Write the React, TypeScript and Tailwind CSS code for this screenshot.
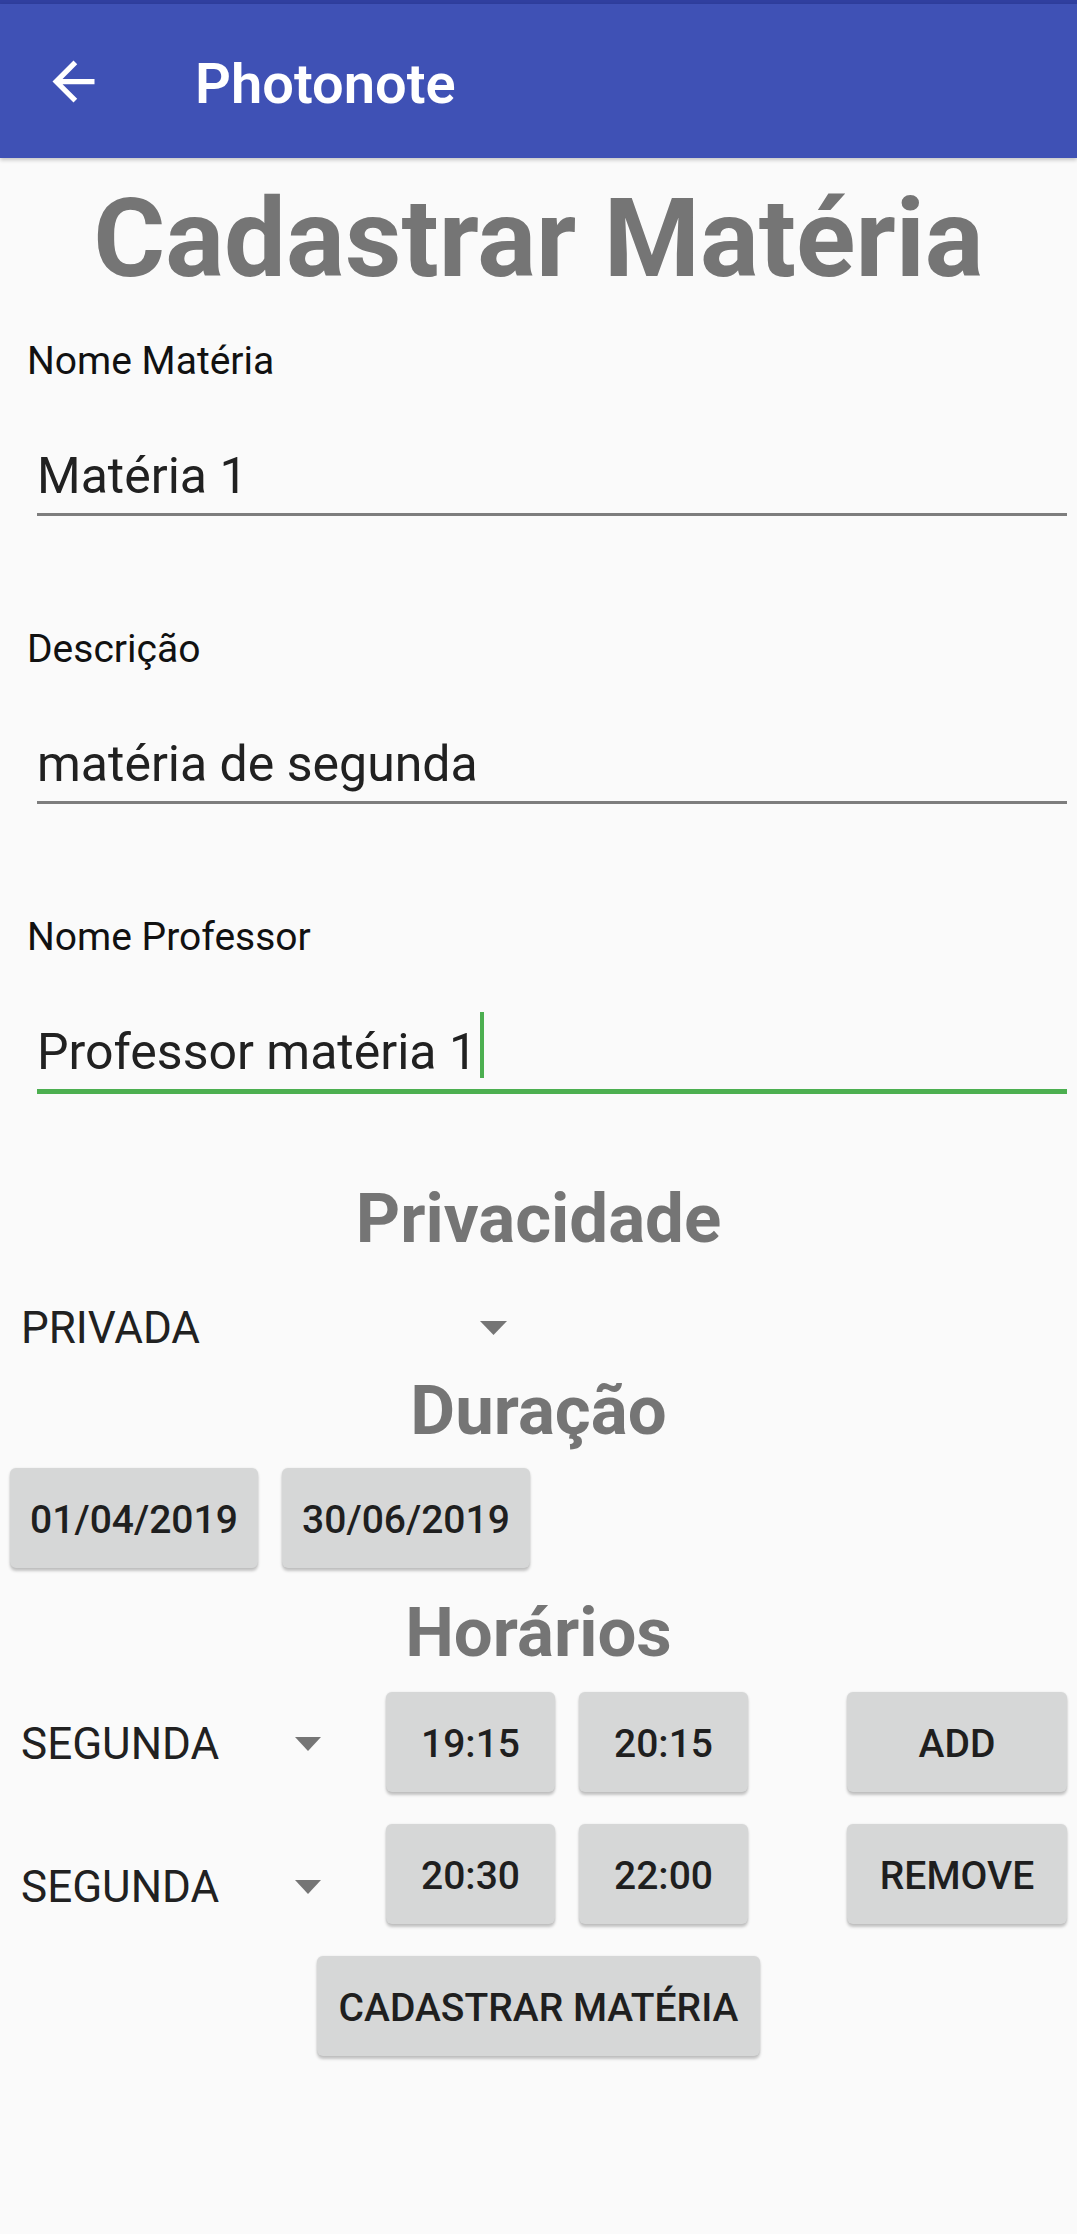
import React from "react";

function Arrow() {
  return (
    <svg width="63" height="63" viewBox="0 0 24 24" fill="#ffffff">
      <path d="M20 11H7.83l5.59-5.59L12 4l-8 8 8 8 1.41-1.41L7.83 13H20v-2z" />
    </svg>
  );
}

function Tri({ w }: { w: number }) {
  return (
    <svg width={w} height="14" viewBox="0 0 27 14" preserveAspectRatio="none">
      <polygon points="0,0 27,0 13.5,14" fill="#757575" />
    </svg>
  );
}

function Field({
  label,
  value,
  focused,
  first,
}: {
  label: string;
  value: string;
  focused?: boolean;
  first?: boolean;
}) {
  return (
    <div className={first ? "mt-[48px]" : "mt-[114px]"}>
      <div className="pl-[27px] text-[39px] leading-none text-[#111111]">{label}</div>
      <div className="ml-[37px] mr-[10px]">
        <div className="mt-[70px] h-[50px] text-[50px] leading-none text-[#212121]">
          <span className="relative">
            {value}
            {focused && (
              <span className="absolute -right-[7px] -top-[11px] h-[66px] w-[4px] bg-[#4caf50]" />
            )}
          </span>
        </div>
        {focused ? (
          <div className="mt-[12px] h-[5px] bg-[#4caf50]" />
        ) : (
          <div className="mt-[12px] h-[3px] bg-[#7d7d7d]" />
        )}
      </div>
    </div>
  );
}

function Btn({ children, w }: { children: React.ReactNode; w: string }) {
  return (
    <div
      className={`${w} flex h-[100px] items-center justify-center rounded-[6px] bg-[#d6d7d7] pt-[4px] text-[39px] font-medium leading-none text-[#1f1f1f] shadow-[0_3px_3px_rgba(0,0,0,0.22),0_0_2px_rgba(0,0,0,0.10)]`}
    >
      {children}
    </div>
  );
}

export default function App() {
  return (
    <div className="min-h-[2234px] w-[1077px] bg-[#fafafa] font-['Roboto',sans-serif]">
      <div className="h-[4px] bg-[#303f9f]" />
      <div className="relative z-10 flex h-[154px] items-center bg-[#3f51b5] shadow-[0_2px_4px_rgba(0,0,0,0.22)]">
        <div className="ml-[42px]">
          <Arrow />
        </div>
        <div className="ml-[90px] pt-[5px] text-[56px] font-semibold leading-none text-white">Photonote</div>
      </div>

      <div className="mt-[26px] text-center text-[110px] font-bold leading-none text-[#757575]">
        Cadastrar Matéria
      </div>

      <Field first label="Nome Matéria" value="Matéria 1" />
      <Field label="Descrição" value="matéria de segunda" />
      <Field label="Nome Professor" value="Professor matéria 1" focused />

      <div className="mt-[90px] text-center text-[69px] font-bold leading-none text-[#757575]">Privacidade</div>

      <div className="mt-[53px] flex items-center pl-[21px]">
        <span className="w-[459px] text-[44px] leading-none text-[#212121]">PRIVADA</span>
        <Tri w={27} />
      </div>

      <div className="mt-[26px] text-center text-[69px] font-bold leading-none text-[#757575]">Duração</div>

      <div className="mt-[23px] flex gap-[24px] pl-[10px]">
        <Btn w="w-[248px]">01/04/2019</Btn>
        <Btn w="w-[248px]">30/06/2019</Btn>
      </div>

      <div className="mt-[30px] text-center text-[69px] font-bold leading-none text-[#757575]">Horários</div>

      <div className="mt-[25px] flex items-center">
        <div className="flex items-center pl-[21px] pt-[4px]">
          <span className="w-[274px] text-[44px] leading-none text-[#212121]">SEGUNDA</span>
          <Tri w={26} />
        </div>
        <div className="ml-[65px] flex gap-[24px]">
          <Btn w="w-[169px]">19:15</Btn>
          <Btn w="w-[169px]">20:15</Btn>
        </div>
        <div className="ml-[99px]">
          <Btn w="w-[220px]">ADD</Btn>
        </div>
      </div>

      <div className="mt-[32px] flex items-center">
        <div className="flex items-center pl-[21px] pt-[26px]">
          <span className="w-[274px] text-[44px] leading-none text-[#212121]">SEGUNDA</span>
          <Tri w={26} />
        </div>
        <div className="ml-[65px] flex gap-[24px]">
          <Btn w="w-[169px]">20:30</Btn>
          <Btn w="w-[169px]">22:00</Btn>
        </div>
        <div className="ml-[99px]">
          <Btn w="w-[220px]">REMOVE</Btn>
        </div>
      </div>

      <div className="mt-[32px] flex justify-center">
        <Btn w="w-[443px]">CADASTRAR MATÉRIA</Btn>
      </div>
    </div>
  );
}
